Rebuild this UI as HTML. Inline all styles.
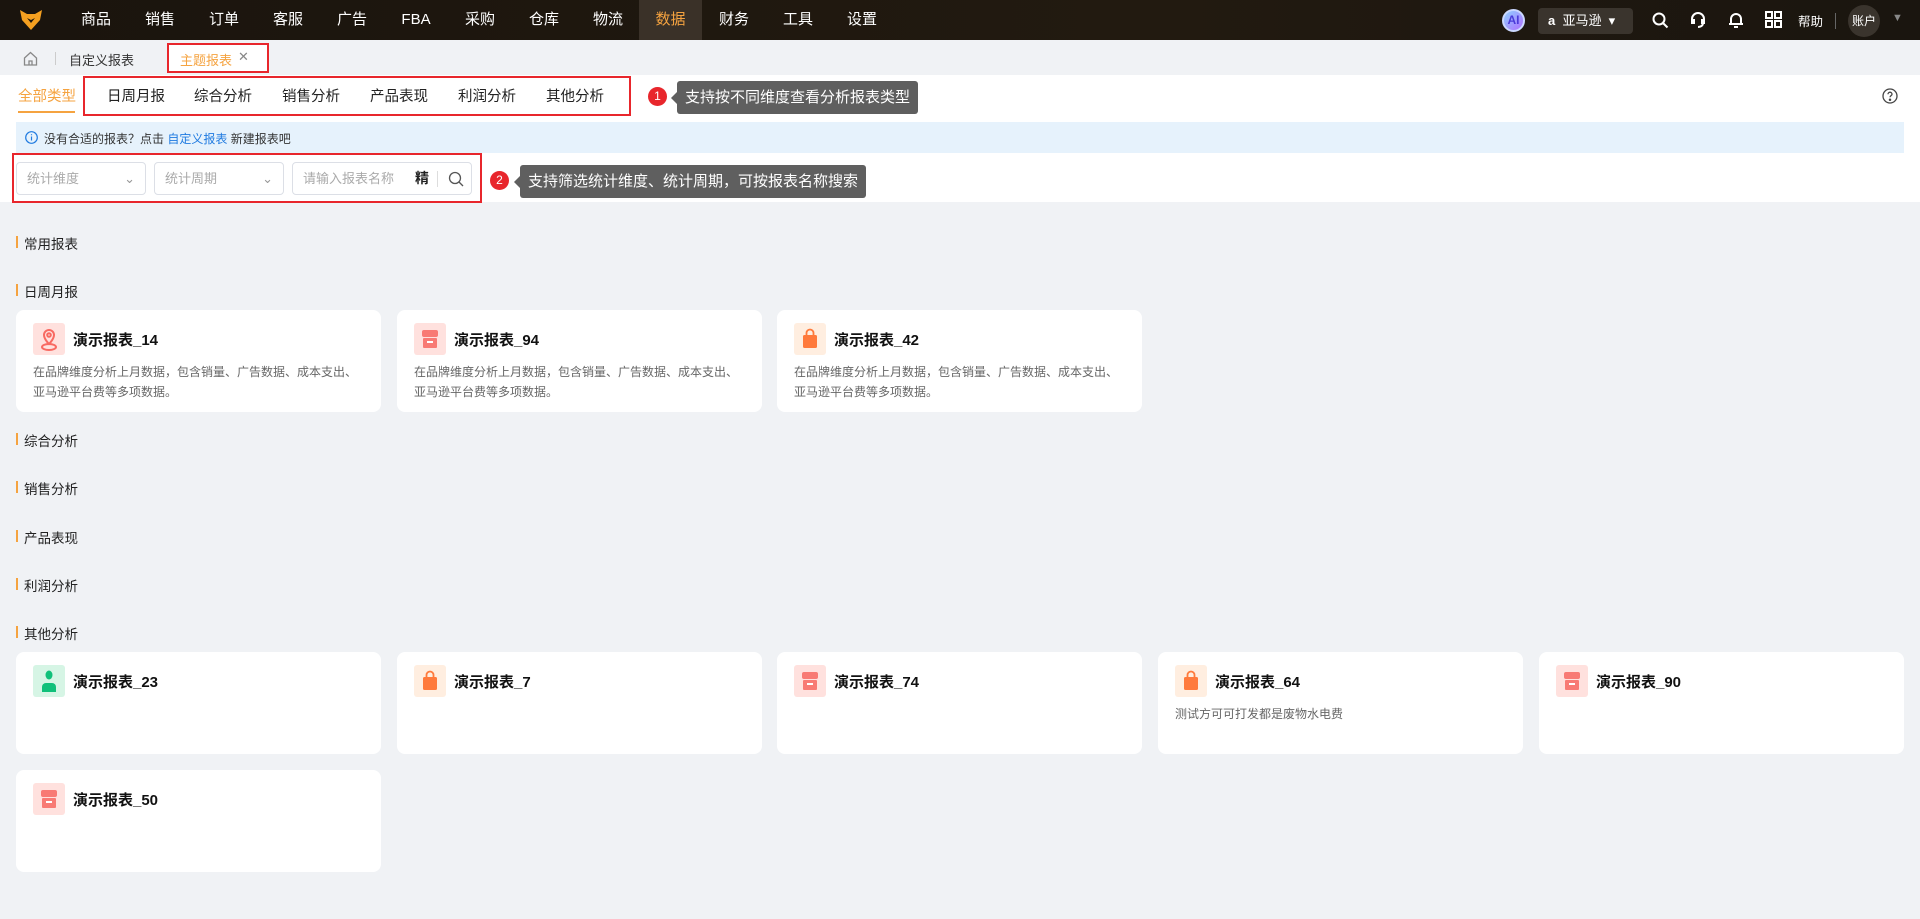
<!DOCTYPE html>
<html><head><meta charset="utf-8"><style>
*{box-sizing:border-box;margin:0;padding:0}
body{width:1920px;height:919px;overflow:hidden;background:#f0f2f5;font-family:"Liberation Sans","Noto Sans CJK SC",sans-serif;position:relative;color:#222}
.nav{position:absolute;left:0;top:0;width:1920px;height:40px;background:linear-gradient(90deg,#1a140d,#221a10 60%,#1a150f)}
.nav .it{position:absolute;top:0;height:40px;line-height:40px;color:#fff;font-size:15px;width:62px;text-align:center}
.abs{position:absolute}
.tabbar{position:absolute;top:40px;left:0;width:1920px;height:35px;background:#f0f2f5}
.white{position:absolute;top:75px;left:0;width:1920px;height:127px;background:#fff}
.cat{position:absolute;top:85px;font-size:14.5px;color:#222}
.redbox{position:absolute;border:2px solid #e8262c}
.tip{position:absolute;background:#5f5f5f;color:#fff;font-size:15px;border-radius:3px;padding:0 8px;height:33px;line-height:33px}
.tip:before{content:"";position:absolute;left:-6px;top:11px;border:6px solid transparent;border-left:0;border-right-color:#5f5f5f}
.num{position:absolute;width:19px;height:19px;border-radius:50%;background:#e8262c;color:#fff;font-size:12px;text-align:center;line-height:19px}
.sel{position:absolute;top:162px;height:33px;border:1px solid #dcdfe6;border-radius:4px;font-size:13px;color:#aaa;line-height:31px;padding-left:10px}
.sec{position:absolute;left:16px;font-size:13.5px;color:#222;padding-left:8px}
.sec:before{content:"";position:absolute;left:0;top:3px;width:2px;height:12px;background:#f5a340}
.card{position:absolute;width:365px;height:102px;background:#fff;border-radius:8px}
.card .ic{position:absolute;left:17px;top:13px;width:32px;height:32px;border-radius:3px}
.card .t{position:absolute;left:57px;top:19px;font-size:15px;font-weight:bold;color:#111}
.card .d{position:absolute;left:17px;top:52px;font-size:12px;color:#666;line-height:20px;width:330px}
</style></head><body>
<div class="nav">
<svg class="abs" style="left:19px;top:9px" width="24" height="22" viewBox="0 0 24 22"><path d="M1 1 L8 5 L16 5 L23 1 L21 11 L12 21 L3 11Z" fill="#f5a020"/><path d="M8 9 L12 14 L16 9 L12 11Z" fill="#1a140d"/></svg>
<div class="it" style="left:65px">商品</div><div class="it" style="left:129px">销售</div><div class="it" style="left:193px">订单</div><div class="it" style="left:257px">客服</div><div class="it" style="left:321px">广告</div><div class="it" style="left:385px">FBA</div><div class="it" style="left:449px">采购</div><div class="it" style="left:513px">仓库</div><div class="it" style="left:577px">物流</div>
<div class="it" style="left:639px;width:63px;background:#3a3128;color:#f5a340">数据</div>
<div class="it" style="left:703px">财务</div><div class="it" style="left:767px">工具</div><div class="it" style="left:831px">设置</div>
<div class="abs" style="left:1502px;top:9px;width:23px;height:23px;border-radius:50%;background:linear-gradient(135deg,#8fd0ff,#b070ff);color:#4b3bd8;font-weight:bold;font-size:12px;text-align:center;line-height:19px;border:2px solid #cbd8ff">AI</div>
<div class="abs" style="left:1538px;top:8px;width:95px;height:26px;border-radius:4px;background:#3a342d;color:#fff;font-size:13px;line-height:26px;padding-left:10px"><b>a</b>&nbsp;&nbsp;亚马逊 &nbsp;▾</div>
<svg class="abs" style="left:1652px;top:12px" width="17" height="17" viewBox="0 0 17 17" fill="none" stroke="#fff" stroke-width="2"><circle cx="7" cy="7" r="5.5"/><path d="M11 11l4.5 4.5"/></svg>
<svg class="abs" style="left:1689px;top:11px" width="18" height="18" viewBox="0 0 18 18" fill="none" stroke="#fff" stroke-width="2"><path d="M3 10V8a6 6 0 0112 0v2M3 9v3h2V9zM13 9v3h2V9zM14 12c0 3-3 4-5 4"/></svg>
<svg class="abs" style="left:1728px;top:11px" width="16" height="18" viewBox="0 0 16 18" fill="none" stroke="#fff" stroke-width="2"><path d="M3 13V8a5 5 0 0110 0v5M1 13h14M6 16h4"/></svg>
<svg class="abs" style="left:1765px;top:11px" width="17" height="17" viewBox="0 0 17 17" fill="none" stroke="#fff" stroke-width="2"><rect x="1" y="1" width="6" height="6"/><rect x="10" y="1" width="6" height="6"/><rect x="1" y="10" width="6" height="6"/><rect x="10" y="10" width="6" height="6"/></svg>
<div class="abs" style="left:1798px;top:11px;color:#fff;font-size:12.5px">帮助</div>
<div class="abs" style="left:1835px;top:13px;width:1px;height:16px;background:#666"></div>
<div class="abs" style="left:1848px;top:5px;width:32px;height:32px;border-radius:50%;background:#3a342d;color:#fff;font-size:12px;text-align:center;line-height:32px">账户</div>
<div class="abs" style="left:1892px;top:12px;color:#888;font-size:11px">▼</div>
</div>
<div class="tabbar">
<svg class="abs" style="left:23px;top:11px" width="15" height="15" viewBox="0 0 15 15" fill="none" stroke="#888" stroke-width="1.3"><path d="M1.5 7L7.5 1.5 13.5 7V14H1.5Z M6 14V10h3v4"/></svg>
<div class="abs" style="left:55px;top:12px;width:1px;height:13px;background:#ccc"></div>
<div class="abs" style="left:69px;top:10px;font-size:13px;color:#333">自定义报表</div>
<div class="abs" style="left:168px;top:3px;width:100px;height:29px;background:#fff"></div>
<div class="abs" style="left:180px;top:10px;font-size:13px;color:#f5a340">主题报表</div>
<div class="abs" style="left:238px;top:9px;font-size:13px;color:#888">✕</div>
<div class="redbox" style="left:167px;top:3px;width:102px;height:30px"></div>
</div>
<div class="white"></div>
<div class="cat" style="left:18px;color:#f5a340">全部类型</div>
<div class="abs" style="left:18px;top:111px;width:57px;height:2px;background:#f5a340"></div>
<div class="cat" style="left:107px">日周月报</div><div class="cat" style="left:194px">综合分析</div><div class="cat" style="left:282px">销售分析</div><div class="cat" style="left:370px">产品表现</div><div class="cat" style="left:458px">利润分析</div><div class="cat" style="left:546px">其他分析</div>
<div class="redbox" style="left:83px;top:76px;width:548px;height:40px"></div>
<div class="num" style="left:648px;top:87px">1</div>
<div class="tip" style="left:677px;top:81px">支持按不同维度查看分析报表类型</div>
<svg class="abs" style="left:1882px;top:88px" width="16" height="16" viewBox="0 0 16 16" fill="none" stroke="#444" stroke-width="1.3"><circle cx="8" cy="8" r="7"/><path d="M6 6.2a2 2 0 114 0c0 1.3-2 1.5-2 3"/><circle cx="8" cy="11.8" r=".6" fill="#444"/></svg>
<div class="abs" style="left:16px;top:122px;width:1888px;height:31px;background:#e6f2fc"></div>
<svg class="abs" style="left:25px;top:131px" width="13" height="13" viewBox="0 0 13 13" fill="none" stroke="#1f7ae0" stroke-width="1.2"><circle cx="6.5" cy="6.5" r="5.8"/><path d="M6.5 5.5v4M6.5 3.3v1"/></svg>
<div class="abs" style="left:44px;top:130px;font-size:12px;color:#333">没有合适的报表？点击 <span style="color:#1f7ae0">自定义报表</span> 新建报表吧</div>
<div class="sel" style="left:16px;width:130px">统计维度<span style="position:absolute;right:10px;color:#999">⌄</span></div>
<div class="sel" style="left:154px;width:130px">统计周期<span style="position:absolute;right:10px;color:#999">⌄</span></div>
<div class="sel" style="left:292px;width:180px">请输入报表名称<span style="position:absolute;left:122px;color:#222;font-weight:bold;font-size:14px">精</span><span style="position:absolute;left:144px;top:8px;width:1px;height:16px;background:#ddd"></span>
<svg style="position:absolute;left:155px;top:8px" width="16" height="16" viewBox="0 0 16 16" fill="none" stroke="#555" stroke-width="1.3"><circle cx="7" cy="7" r="5.5"/><path d="M11 11l4 4"/></svg></div>
<div class="redbox" style="left:12px;top:153px;width:470px;height:50px"></div>
<div class="num" style="left:490px;top:171px">2</div>
<div class="tip" style="left:520px;top:165px">支持筛选统计维度、统计周期，可按报表名称搜索</div>

<div class="sec" style="top:233px">常用报表</div>
<div class="sec" style="top:281px">日周月报</div>
<div class="sec" style="top:430px">综合分析</div>
<div class="sec" style="top:478px">销售分析</div>
<div class="sec" style="top:527px">产品表现</div>
<div class="sec" style="top:575px">利润分析</div>
<div class="sec" style="top:623px">其他分析</div>

<div class="card" style="left:16px;top:310px"><div class="ic" style="background:#ffe1de"><svg width="32" height="32" viewBox="0 0 32 32" fill="none" stroke="#f86a62" stroke-width="2"><path d="M16 21s-5-5-5-9a5 5 0 0110 0c0 4-5 9-5 9z"/><circle cx="16" cy="12" r="1.8"/><ellipse cx="16" cy="24" rx="7" ry="3"/></svg></div><div class="t">演示报表_14</div><div class="d">在品牌维度分析上月数据，包含销量、广告数据、成本支出、亚马逊平台费等多项数据。</div></div>
<div class="card" style="left:397px;top:310px"><div class="ic" style="background:#ffe1de"><svg width="32" height="32" viewBox="0 0 32 32"><rect x="8" y="7" width="16" height="7" rx="2" fill="#f87a74"/><rect x="9" y="15" width="14" height="10" rx="1" fill="#f87a74"/><rect x="13" y="18" width="6" height="2" fill="#fff"/></svg></div><div class="t">演示报表_94</div><div class="d">在品牌维度分析上月数据，包含销量、广告数据、成本支出、亚马逊平台费等多项数据。</div></div>
<div class="card" style="left:777px;top:310px"><div class="ic" style="background:#ffeee0"><svg width="32" height="32" viewBox="0 0 32 32"><path d="M12.5 12V10a3.5 3.5 0 017 0v2" stroke="#ff7a3c" stroke-width="1.8" fill="none"/><rect x="9" y="12" width="14" height="13" rx="1.5" fill="#ff7a3c"/></svg></div><div class="t">演示报表_42</div><div class="d">在品牌维度分析上月数据，包含销量、广告数据、成本支出、亚马逊平台费等多项数据。</div></div>

<div class="card" style="left:16px;top:652px"><div class="ic" style="background:#d6f5e5"><svg width="32" height="32" viewBox="0 0 32 32" fill="#10c07a"><ellipse cx="16" cy="10" rx="3.5" ry="4.5"/><path d="M9 27v-5a4 4 0 014-4h6a4 4 0 014 4v5z"/></svg></div><div class="t">演示报表_23</div></div>
<div class="card" style="left:397px;top:652px"><div class="ic" style="background:#ffeee0"><svg width="32" height="32" viewBox="0 0 32 32"><path d="M12.5 12V10a3.5 3.5 0 017 0v2" stroke="#ff7a3c" stroke-width="1.8" fill="none"/><rect x="9" y="12" width="14" height="13" rx="1.5" fill="#ff7a3c"/></svg></div><div class="t">演示报表_7</div></div>
<div class="card" style="left:777px;top:652px"><div class="ic" style="background:#ffe1de"><svg width="32" height="32" viewBox="0 0 32 32"><rect x="8" y="7" width="16" height="7" rx="2" fill="#f87a74"/><rect x="9" y="15" width="14" height="10" rx="1" fill="#f87a74"/><rect x="13" y="18" width="6" height="2" fill="#fff"/></svg></div><div class="t">演示报表_74</div></div>
<div class="card" style="left:1158px;top:652px"><div class="ic" style="background:#ffeee0"><svg width="32" height="32" viewBox="0 0 32 32"><path d="M12.5 12V10a3.5 3.5 0 017 0v2" stroke="#ff7a3c" stroke-width="1.8" fill="none"/><rect x="9" y="12" width="14" height="13" rx="1.5" fill="#ff7a3c"/></svg></div><div class="t">演示报表_64</div><div class="d">测试方可可打发都是废物水电费</div></div>
<div class="card" style="left:1539px;top:652px"><div class="ic" style="background:#ffe1de"><svg width="32" height="32" viewBox="0 0 32 32"><rect x="8" y="7" width="16" height="7" rx="2" fill="#f87a74"/><rect x="9" y="15" width="14" height="10" rx="1" fill="#f87a74"/><rect x="13" y="18" width="6" height="2" fill="#fff"/></svg></div><div class="t">演示报表_90</div></div>

<div class="card" style="left:16px;top:770px"><div class="ic" style="background:#ffe1de"><svg width="32" height="32" viewBox="0 0 32 32"><rect x="8" y="7" width="16" height="7" rx="2" fill="#f87a74"/><rect x="9" y="15" width="14" height="10" rx="1" fill="#f87a74"/><rect x="13" y="18" width="6" height="2" fill="#fff"/></svg></div><div class="t">演示报表_50</div></div>
</body></html>
